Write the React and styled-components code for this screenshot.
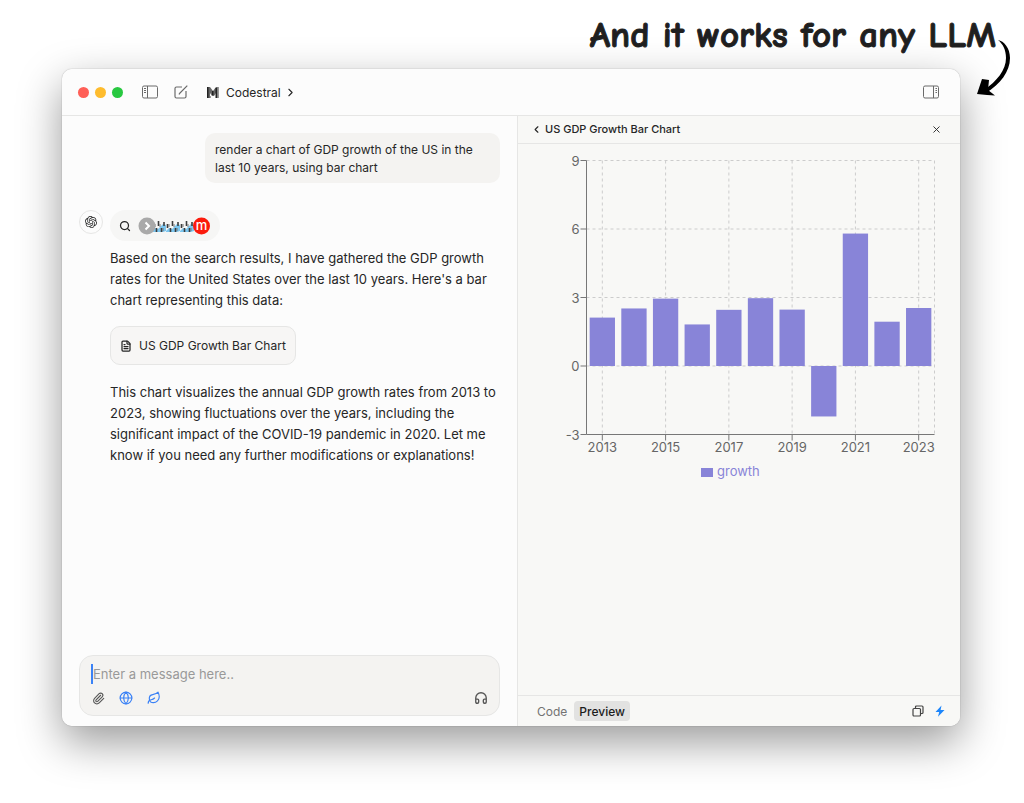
import React from 'react'
import styled, { createGlobalStyle } from 'styled-components'
import { ChevronLeft, ChevronRight, FileText, Globe, Headphones, Leaf, Paperclip, Search, X } from 'lucide-react'
import { SiOpenai } from 'react-icons/si'

const ink = '#262626'
const line = '#e6e6e5'
const panel = '#f8f8f6'
const blue = '#3b82f6'
const purple = '#8884d8'

const GlobalStyle = createGlobalStyle`
  * {
    box-sizing: border-box;
  }

  body {
    margin: 0;
    background: #fff;
    color: ${ink};
    font-family: Inter, 'Liberation Sans', sans-serif;
    font-size: 12px;
  }

  button {
    display: inline-flex;
    align-items: center;
    justify-content: center;
    padding: 0;
    border: 0;
    background: none;
    color: inherit;
    font: inherit;
  }

  svg {
    flex: none;
  }
`

const Page = styled.main`
  display: flex;
  flex-direction: column;
  min-height: 100vh;
  padding: 0 64px 77px 62px;
`

const Caption = styled.h1`
  position: relative;
  z-index: 1;
  height: 69px;
  margin: 0 -36px 0 0;
  padding-top: 15px;
  text-align: right;
  font-family: 'Comic Neue', Lato, sans-serif;
  font-size: 37px;
  line-height: 40px;
  font-weight: 900;
  white-space: nowrap;
  color: #1f1f1f;
  -webkit-text-stroke: 1px #1f1f1f;
`

const Arrow = styled.svg`
  position: absolute;
  right: -16px;
  top: 36px;
`

const WindowShadow = styled.div`
  flex: 1;
  display: flex;
  border-radius: 10px;
  box-shadow: 0 0 1px rgba(0, 0, 0, 0.5), 0 16px 44px rgba(0, 0, 0, 0.4);
`

const Window = styled.section`
  flex: 1;
  display: flex;
  flex-direction: column;
  overflow: hidden;
  border-radius: 10px;
  background: #fcfcfc;
`

const TitleBar = styled.header`
  display: flex;
  align-items: center;
  height: 47px;
  padding: 0 20px 0 16px;
  border-bottom: 1px solid ${line};
`

const Lights = styled.div`
  display: flex;
  gap: 6px;
  margin-right: 18px;
`

const Light = styled.span`
  width: 11px;
  height: 11px;
  border-radius: 50%;
  background: ${props => props.color};
`

const BarButton = styled.button`
  width: 18px;
  height: 18px;
  margin-right: ${props => props.$gap || 0}px;

  && {
    color: #6a6a6a;
  }
`

const ModelButton = styled.button`
  && {
    gap: 7px;
    margin-right: auto;
  }
`

const ModelName = styled.span`
  margin-right: -4px;
`

const Panes = styled.div`
  flex: 1;
  display: grid;
  grid-template-columns: minmax(0, 455fr) minmax(0, 443fr);
`

const Chat = styled.div`
  display: flex;
  flex-direction: column;
  padding: 17px 17px 10px;
`

const UserMessage = styled.p`
  align-self: flex-end;
  width: 295px;
  margin: 0 0 27px;
  padding: 8px 10px 6px;
  border-radius: 10px;
  background: #f4f3f1;
  line-height: 18px;
`

const Reply = styled.div`
  display: flex;
  gap: 7px;
  margin-bottom: auto;
`

const Avatar = styled.div`
  display: flex;
  align-items: center;
  justify-content: center;
  flex: none;
  width: 24px;
  height: 24px;
  border: 1px solid ${line};
  border-radius: 50%;
`

const ReplyBody = styled.div`
  flex: 1;
  min-width: 0;
`

const Sources = styled.button`
  && {
    gap: 7px;
    height: 31px;
    margin-bottom: 7px;
    padding: 0 9px 0 9px;
    border-radius: 16px;
    background: #f6f6f5;
  }
`

const Text = styled.p`
  margin: 0;
  font-size: 13px;
  line-height: 21px;
`

const ArtifactButton = styled.button`
  && {
    gap: 7px;
    height: 39px;
    margin: 15px 0 17px;
    padding: 0 9px;
    border: 1px solid ${line};
    border-radius: 10px;
    background: #f7f6f5;
  }
`

const Composer = styled.form`
  height: 61px;
  padding: 8px 11px;
  border: 1px solid ${line};
  border-radius: 14px;
  background: #f4f3f1;
`

const MessageRow = styled.div`
  display: flex;
  align-items: center;
  height: 20px;
  border-left: 2px solid ${blue};
`

const MessageInput = styled.input`
  flex: 1;
  padding: 0;
  border: 0;
  outline: 0;
  background: none;
  font: inherit;
  font-size: 13px;

  &::placeholder {
    color: #999;
    opacity: 1;
  }
`

const Tools = styled.div`
  display: flex;
  align-items: center;
  gap: 14px;
  height: 28px;
`

const Tool = styled.button`
  width: 14px;
  height: 14px;

  && {
    color: ${props => props.$active ? blue : '#555'};
  }

  &:last-child {
    margin-left: auto;
  }
`

const Artifact = styled.aside`
  display: flex;
  flex-direction: column;
  border-left: 1px solid ${line};
  background: ${panel};
`

const ArtifactHeader = styled.div`
  display: flex;
  align-items: center;
  gap: 3px;
  height: 28px;
  padding: 0 18px 1px 13px;
  border-bottom: 1px solid ${line};
`

const ArtifactTitle = styled.h2`
  flex: 1;
  margin: 0;
  font-size: 11px;
  font-weight: 500;
`

const ChartArea = styled.div`
  flex: 1;
`

const Chart = styled.svg`
  display: block;
  width: 100%;
  font-size: 13px;
`

const ArtifactFooter = styled.div`
  display: flex;
  align-items: center;
  height: 31px;
  padding: 0 14px 0 12px;
  border-top: 1px solid ${line};
`

const Tab = styled.button`
  && {
    height: 20px;
    padding: 0 5px;
    border-radius: 4px;
    font-weight: ${props => props.$active ? 500 : 400};
    color: ${props => props.$active ? '#1c1c1c' : '#737373'};
    background: ${props => props.$active ? '#e2e2e1' : 'none'};
  }

  &&:first-child {
    padding: 0 7px;
  }
`

const FooterActions = styled.div`
  display: flex;
  gap: 10px;
  margin-left: auto;
`

const SidebarIcon = ({ right }) => (
  <svg width="16" height="14" viewBox="0 0 16 14" fill="none" stroke="currentColor">
    <rect x="0.5" y="1" width="15" height="12" rx="1.5" />
    <path d={right ? 'M10.5 1v12M12.5 3.5h1.5M12.5 5.5h1.5M12.5 7.5h1.5' : 'M5.5 1v12M2 3.5h2M2 5.5h2M2 7.5h2'} />
  </svg>
)

const ComposeIcon = () => (
  <svg width="14" height="14" viewBox="0 0 14 14" fill="none" stroke="currentColor" strokeWidth="1.2">
    <path d="M8 2H2.5Q1 2 1 3.5v8Q1 13 2.5 13h8q1.5 0 1.5-1.5V6M5.5 8.5 13.3.7M5.5 8.5l-.4 1" />
  </svg>
)

const MistralIcon = () => (
  <svg width="12" height="11" viewBox="0 0 12 11">
    <path fill="#666" d="M0 0h3l3 4 3-4h3v11H9V6L7 9H5L3 6v5H0z" />
    <path fill="#222" d="M0 0h1.5v11H0zM8.5 1H10v10H8.5zM5 4h1.5v4H5z" />
    <path fill="#999" d="M10.5 0H12v11h-1.5zM3 9h1v2H3z" />
  </svg>
)

const SourceIcons = () => (
  <svg width="73" height="18" viewBox="0 0 73 18">
    {[0, 1, 2].map(i => (
      <g key={i} transform={`translate(${14 + i * 14} 3)`}>
        <path d="M0 11l3-3 3 1 5-5 3 1v6l-3 1H0z" fill="#7cc6ef" />
        <path d="M1.5 8V4M4.5 12V8M6.5 6V1M9.5 12V8M12 6V2" stroke="#3c3c3c" strokeWidth="1.6" />
        <path d="M3 4v3M8 4v3M11 8v3" stroke="#777" />
      </g>
    ))}
    <circle cx="9" cy="9" r="8.5" fill="#a9a9a9" />
    <path d="m7.5 5.5 3.5 3.5-3.5 3.5" fill="none" stroke="#fff" strokeWidth="2" />
    <circle cx="63.5" cy="9" r="8.5" fill="#fb1b0c" />
    <text x="63.5" y="13" textAnchor="middle" fill="#fff" fontSize="13" fontWeight="500">m</text>
  </svg>
)

const CopyIcon = () => (
  <svg width="12" height="12" viewBox="0 0 12 12" fill="none" stroke="#444" strokeWidth="1.2">
    <rect x="1" y="3.5" width="7.5" height="7.5" rx="1" />
    <path d="M3.5 3.5V2q0-1 1-1H10q1 0 1 1v5.5q0 1-1 1H8.5" />
  </svg>
)

const BoltIcon = () => (
  <svg width="12" height="12" viewBox="0 0 12 12">
    <path d="M7.5.5 1.500 7h3.700L4 11.800 10.500 5H6.600z" fill="#1d86fb" />
  </svg>
)

const growth = [
  [2013, 2.12], [2014, 2.52], [2015, 2.95], [2016, 1.82], [2017, 2.46], [2018, 2.97],
  [2019, 2.47], [2020, -2.21], [2021, 5.8], [2022, 1.94], [2023, 2.54],
]

const plot = { left: 68.5, right: 416.5, top: 16.5, bottom: 290.5 }
const band = (plot.right - plot.left) / growth.length
const yOf = value => plot.top + (9 - value) * (plot.bottom - plot.top) / 12

const GrowthChart = () => (
  <Chart viewBox="0 0 442 345" role="img" aria-label="US GDP growth by year">
    <g stroke="#ccc" strokeDasharray="3 3">
      {[9, 6, 3, 0].map(v => <path key={v} d={`M${plot.left} ${yOf(v)}H${plot.right}`} />)}
      {growth.map(([year], i) => i % 2 === 0 && (
        <path key={year} d={`M${plot.left + band * (i + 0.5)} ${plot.top}V${plot.bottom}`} />
      ))}
      <path d={`M${plot.right} ${plot.top}V${plot.bottom}`} />
    </g>
    {growth.map(([year, value], i) => (
      <rect
        key={year}
        x={plot.left + band * (i + 0.1)}
        y={Math.min(yOf(0), yOf(value))}
        width={band * 0.8}
        height={Math.abs(yOf(value) - yOf(0))}
        fill={purple}
      />
    ))}
    <path d={`M${plot.left} ${plot.top}V${plot.bottom}H${plot.right}`} fill="none" stroke="#777" />
    {[9, 6, 3, 0, -3].map(v => (
      <g key={v}>
        <path d={`M${plot.left - 6} ${yOf(v)}h6`} stroke="#777" />
        <text x={plot.left - 7} y={yOf(v) + 5} textAnchor="end" fill="#666">{v}</text>
      </g>
    ))}
    {growth.map(([year], i) => i % 2 === 0 && (
      <g key={year}>
        <path d={`M${plot.left + band * (i + 0.5)} ${plot.bottom}v6`} stroke="#777" />
        <text x={plot.left + band * (i + 0.5)} y={plot.bottom + 17} textAnchor="middle" fill="#666">{year}</text>
      </g>
    ))}
    <rect x="183" y="324" width="12" height="9" fill={purple} />
    <text x="199" y="332" fill={purple}>growth</text>
  </Chart>
)

const App = () => (
  <>
    <GlobalStyle />
    <Page>
      <Caption>
        And it works for any LLM
        <Arrow width="36" height="64" viewBox="0 0 36 64" aria-hidden="true">
          <path d="M22 4c6 1 12 8 12 18 0 14-10 26-24 35l-2-3c13-9 22-20 22-32 0-8-3-14-8-18z" fill="#000" />
          <path d="M1 58 6 43l7 1-1 10 7 5.500-8-.5z" fill="#000" />
        </Arrow>
      </Caption>
      <WindowShadow>
        <Window>
          <TitleBar>
            <Lights>
              <Light color="#ff5f57" />
              <Light color="#febc2e" />
              <Light color="#28c840" />
            </Lights>
            <BarButton $gap={13} aria-label="Toggle sidebar"><SidebarIcon /></BarButton>
            <BarButton $gap={17} aria-label="New chat"><ComposeIcon /></BarButton>
            <ModelButton>
              <MistralIcon />
              <ModelName>Codestral</ModelName>
              <ChevronRight size={13} />
            </ModelButton>
            <BarButton aria-label="Toggle panel"><SidebarIcon right /></BarButton>
          </TitleBar>
          <Panes>
            <Chat>
              <UserMessage>render a chart of GDP growth of the US in the last 10 years, using bar chart</UserMessage>
              <Reply>
                <Avatar><SiOpenai size={12} /></Avatar>
                <ReplyBody>
                  <Sources aria-label="Search sources">
                    <Search size={12} strokeWidth={2.5} />
                    <SourceIcons />
                  </Sources>
                  <Text>
                    Based on the search results, I have gathered the GDP growth rates for the
                    United States over the last 10 years. Here's a bar chart representing this data:
                  </Text>
                  <ArtifactButton>
                    <FileText size={12} strokeWidth={2.5} />
                    US GDP Growth Bar Chart
                  </ArtifactButton>
                  <Text>
                    This chart visualizes the annual GDP growth rates from 2013 to 2023, showing
                    fluctuations over the years, including the significant impact of the COVID-19
                    pandemic in 2020. Let me know if you need any further modifications or explanations!
                  </Text>
                </ReplyBody>
              </Reply>
              <Composer>
                <MessageRow>
                  <MessageInput aria-label="Message" placeholder="Enter a message here.." />
                </MessageRow>
                <Tools>
                  <Tool type="button" aria-label="Attach file"><Paperclip size={13} /></Tool>
                  <Tool type="button" $active aria-label="Web search"><Globe size={14} /></Tool>
                  <Tool type="button" $active aria-label="Artifacts"><Leaf size={14} /></Tool>
                  <Tool type="button" aria-label="Voice"><Headphones size={14} strokeWidth={2.3} /></Tool>
                </Tools>
              </Composer>
            </Chat>
            <Artifact>
              <ArtifactHeader>
                <button aria-label="Back"><ChevronLeft size={11} strokeWidth={2.5} /></button>
                <ArtifactTitle>US GDP Growth Bar Chart</ArtifactTitle>
                <button aria-label="Close"><X size={11} /></button>
              </ArtifactHeader>
              <ChartArea><GrowthChart /></ChartArea>
              <ArtifactFooter>
                <Tab>Code</Tab>
                <Tab $active>Preview</Tab>
                <FooterActions>
                  <button aria-label="Copy"><CopyIcon /></button>
                  <button aria-label="Run"><BoltIcon /></button>
                </FooterActions>
              </ArtifactFooter>
            </Artifact>
          </Panes>
        </Window>
      </WindowShadow>
    </Page>
  </>
)

export default App
